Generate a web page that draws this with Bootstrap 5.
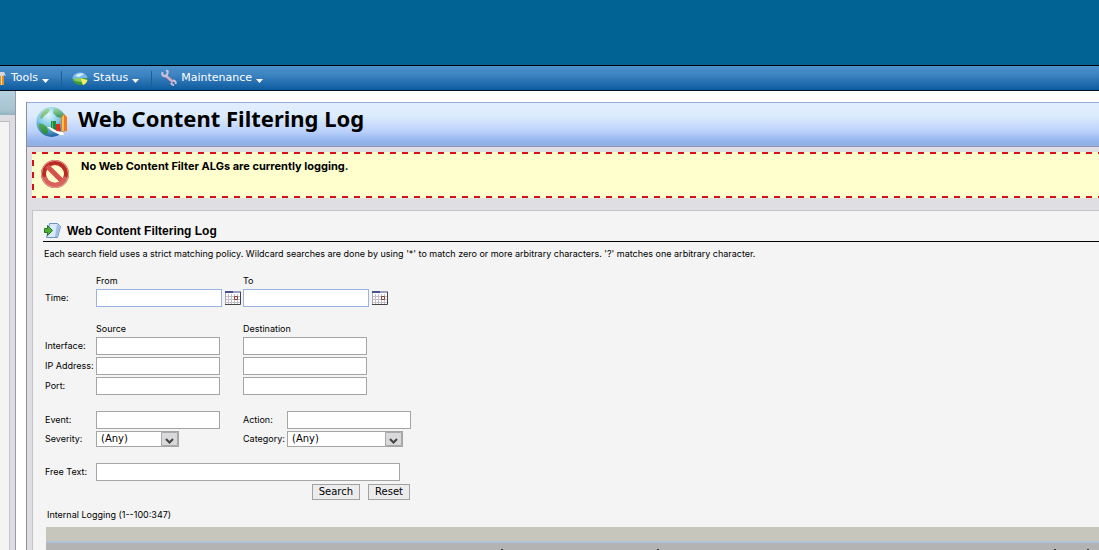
<!DOCTYPE html>
<html lang="en">
<head>
<meta charset="utf-8">
<meta name="viewport" content="width=device-width, initial-scale=1">
<title>Web Content Filtering Log</title>
<link href="https://cdn.jsdelivr.net/npm/bootstrap@5.3.0/dist/css/bootstrap.min.css" rel="stylesheet">
<style>
  body { font-family: Inter, Arial, sans-serif; font-size: 9px; line-height: 12px; color: #000; background: #fff; }
  .brand-bar { height: 65px; background: #006394; }
  .menu-bar { height: 26px; border-top: 1px solid #000; border-bottom: 1px solid #001020; background: linear-gradient(#4a92cd, #3b82c0 40%, #0c5a9e); font-family: "DejaVu Sans", Verdana, sans-serif; font-size: 11px; line-height: 24px; overflow: hidden; }
  .menu-bar .nav-link { color: #fff; padding: 0; display: flex; align-items: center; }
  .menu-bar .nav-item + .nav-item { margin-left: 12px; padding-left: 8px; background: linear-gradient(#1d5c96, #1d5c96) left center / 1px 14px no-repeat; }
  .caret { width: 7px; height: 4px; margin: 5px 0 0 4px; }
  .side-pane { width: 16px; flex: none; background: #dcdce2; border-right: 1px solid #9a9aa6; }
  .side-head { height: 24px; background: linear-gradient(#b6d0e0, #a5c4d0 80%, #93b3c0); }
  .side-body { margin: 6px 5px 0 0; background: #f4f4f4; border-top: 1px solid #bbb; border-right: 1px solid #c4c4cc; }
  .page-pane { margin: 11px 0 0 10px; background: #dfdfe3; border-left: 1px solid #8d8d99; min-width: 0; }
  .page-head { height: 45px; padding-left: 9px; border-top: 1px solid #94afd8; border-bottom: 1px solid #9490b8; background: linear-gradient(#e2eefd, #dcebfd 30%, #bcd2fa 65%, #94b5ee 88%, #8fb0de); }
  .page-head h1 { font: bold 22px/30px "Noto Sans", Tahoma, sans-serif; margin: 0 0 0 8px; }
  .notice { height: 46px; margin: 5px 0 0 5px; padding: 6px 0 0 9px; font: bold 11px/16px Inter, Arial, sans-serif;
    background:
      linear-gradient(90deg, #d3121a 50%, transparent 50%) 10px 0 / 12px 2px repeat-x,
      linear-gradient(90deg, #d3121a 50%, transparent 50%) 10px 100% / 12px 2px repeat-x,
      linear-gradient(#d3121a 50%, transparent 50%) 0 8px / 2px 12px repeat-y,
      #ffffce; }
  .log-panel { margin: 12px 0 0 5px; padding: 11px 0 0 10px; background: #f4f4f4; border-top: 1px solid #c3c3c8; border-left: 1px solid #c3c3c8; }
  .log-panel h2 { font: bold 12px/18px "Liberation Sans", Arial, sans-serif; margin: 0 0 0 5px; }
  .section-head { height: 20px; border-bottom: 1px solid #000; }
  .hint { margin: 6px 0 0 1px; }
  .form-area { padding: 15px 0 0 2px; gap: 2px; }
  .form-area .new-group { margin-top: 14px; }
  .form-area label { width: 51px; flex: none; white-space: nowrap; }
  .form-area .near-label { width: 44px; }
  .slot { width: 147px; flex: none; }
  .heads { padding-left: 51px; }
  .field { width: 124px; height: 18px; padding: 0 3px; border: 1px solid #a5a5a5; border-radius: 0; background: #fff; flex: none; }
  .date-field { width: 126px; border-color: #9bb3e0; }
  .wide-field { width: 304px; }
  .pick { height: 16px; appearance: none; border: 1px solid #a5a5a5; border-radius: 0; color: #000; padding: 0 4px; font: 10px/14px "DejaVu Sans", Verdana, sans-serif; background: #fff url("data:image/svg+xml,%3Csvg xmlns='http://www.w3.org/2000/svg' width='17' height='14'%3E%3Cpath fill='%23d9d9dc' stroke='%23a9a9a9' d='M.5.5h16v13H.5z'/%3E%3Cpath fill='none' stroke='%23444' stroke-width='2' d='M5 7l3.500 3.500L12 7'/%3E%3C/svg%3E") right center no-repeat; }
  .pick-narrow { width: 83px; }
  .pick-broad { width: 116px; }
  .cmd { height: 16px; padding: 0 6px; border: 1px solid #a2a2a2; border-radius: 0; background: #ececef; color: #000; font: 10px/14px "DejaVu Sans", Verdana, sans-serif; }
  .cmd-row { width: 365px; gap: 8px; padding-top: 1px; }
  .cal { padding: 0; border: 0; background: none; line-height: 0; margin-left: 3px; }
  .list-note { margin: 9px 0 6px 4px; }
  .grid-top { height: 16px; margin-left: 3px; background: #c6c6bc; border-bottom: 2px solid #adc3dc; }
  .grid-head { min-height: 7px; margin-left: 3px; background: #b3b3b3; }
  .tip { width: 2px; height: 1px; margin-top: 6px; background: #333; }
  .tip-first { margin-left: 455px; }
  .tip-second { margin-left: 154px; }
  .tip-third { margin-left: 395px; }
  .tip-fourth { margin-left: 31px; }
</style>
</head>
<body class="d-flex flex-column min-vh-100">
<header>
  <div class="brand-bar"></div>
  <nav class="menu-bar">
    <ul class="nav flex-nowrap">
      <li class="nav-item"><a class="nav-link" href="#">
        <svg width="11" height="18" viewBox="0 0 11 18"><path fill="#d98f38" d="M0 6h4v10H0z"/><path fill="#ffe0a4" d="M1 6h1v10H1z"/><path fill="#d5d8dc" d="M0 3h4l2 4-2-1-1 1H0z"/></svg>Tools<svg class="caret"><path fill="#fff" d="M0 0h7L3.500 4z"/></svg></a></li>
      <li class="nav-item"><a class="nav-link" href="#">
        <svg width="20" height="18" viewBox="0 0 20 18"><ellipse cx="11" cy="10" rx="7.500" ry="6" fill="#3f9b39"/><path fill="#75b9ee" d="M3.500 10C3 2 17 1 18.500 9L11 9z"/><path fill="#d9efff" d="M6 7q4-4 9-2l-5 3z"/><path fill="#f5ef66" d="M11 9l7.500 2q-1 4-4.500 5z"/><path fill="#8ccc65" d="M4 11q3-3 7-2l2 4q-5 0-9-2z"/></svg><span class="ms-1">Status</span><svg class="caret"><path fill="#fff" d="M0 0h7L3.500 4z"/></svg></a></li>
      <li class="nav-item"><a class="nav-link" href="#">
        <svg width="22" height="18" viewBox="0 0 22 18"><g fill="none"><path stroke="#75658e" stroke-width="4" d="M7 7l7 6"/><path stroke="#c3b3d2" stroke-width="2.500" d="M6 6l8 7"/><path stroke="#cfc2dc" stroke-width="2" d="M3.500 3q-1 3 1.500 4T8.500 4.500 7 2M12 14q1 2.500 3 2M16.500 15q1-3-2.500-3.500"/></g></svg>Maintenance<svg class="caret"><path fill="#fff" d="M0 0h7L3.500 4z"/></svg></a></li>
    </ul>
  </nav>
</header>
<div class="d-flex flex-grow-1">
  <aside class="side-pane d-flex flex-column"><div class="side-head"></div><div class="side-body flex-grow-1"></div></aside>
  <main class="page-pane flex-grow-1 d-flex flex-column">
    <div class="page-head d-flex align-items-start">
      <svg width="34" height="36" viewBox="0 0 34 36"><defs><radialGradient id="globe" cx=".4" cy=".25" r=".8"><stop offset="0" stop-color="#e2f8ff"/><stop offset=".5" stop-color="#7cc6e6"/><stop offset="1" stop-color="#14549a"/></radialGradient><linearGradient id="land" x2="0" y2="1"><stop offset="0" stop-color="#a5d99a"/><stop offset="1" stop-color="#218a33"/></linearGradient></defs><circle cx="15.500" cy="19" r="15" fill="url(#globe)"/><path fill="url(#land)" d="M5 11q3-4 7-6l2 2-2 3-4 3-2 3-2-1zM3 20l4 1 4 3 1 4-1 4q-6-3-8-8z"/><path fill="url(#land)" opacity=".8" d="M18 5q7 1 10 7l-2 3-5-1-4-4z"/><path fill="#1d8b3f" d="M15 18h5v10h-5z"/><path fill="#55bd62" d="M16 18h1v9h-1z"/><path fill="#d82a26" d="M20 21h4v9h-4z"/><path fill="#ee7a20" d="M25 14l3-3 3 3v14l-6 1z"/><path fill="#ffc14c" d="M26 14l2-2v16h-2z"/><path fill="#fff" d="M11 24l3 0 7 4 6 1 1 3-4 0-8-4z"/></svg>
      <h1>Web Content Filtering Log</h1>
    </div>
    <div class="notice d-flex align-items-start" role="alert">
      <svg class="me-2 flex-shrink-0" width="32" height="32" viewBox="0 0 32 32"><g fill="none" stroke-width="5"><circle cx="14" cy="16" r="11.500" stroke="#bd2a24"/><path stroke="#d4524b" d="M6 8l16 16"/><path stroke="#d9625b" d="M3 19a11.500 11.500 0 0 0 22 0"/><circle cx="14" cy="16" r="13.500" stroke="#e3a59a" stroke-width="1"/></g></svg>
      <div>No Web Content Filter ALGs are currently logging.</div>
    </div>
    <section class="log-panel flex-grow-1 d-flex flex-column">
      <div class="section-head d-flex">
        <svg class="flex-shrink-0" width="19" height="18" viewBox="0 0 19 18"><path fill="#d9e9fb" stroke="#6c93c5" d="M6.500 1.500h8l3 3-3 11h-11l1-4z"/><path fill="#9dbde8" d="M14 2l3 3-3 10h-2z"/><path fill="#50ae35" stroke="#24762a" d="M1.500 6.500h3v-3l5 5-5 5v-3h-3z"/></svg>
        <h2>Web Content Filtering Log</h2>
      </div>
      <p class="hint text-nowrap">Each search field uses a strict matching policy. Wildcard searches are done by using '*' to match zero or more arbitrary characters. '?' matches one arbitrary character.</p>
      <form class="form-area d-flex flex-column align-items-start" onsubmit="return false">
        <div class="heads d-flex"><span class="slot">From</span><span>To</span></div>
        <div class="d-flex align-items-center"><label for="from">Time:</label>
          <div class="slot d-flex align-items-center"><input class="field date-field" id="from" type="text"><button class="cal" type="button" aria-label="Pick start date"><svg width="16" height="16"><use href="#calendar"/></svg></button></div>
          <div class="slot d-flex align-items-center"><input class="field date-field" type="text" aria-label="Time to"><button class="cal" type="button" aria-label="Pick end date"><svg width="16" height="16"><use href="#calendar"/></svg></button></div>
        </div>
        <div class="heads new-group d-flex"><span class="slot">Source</span><span>Destination</span></div>
        <div class="d-flex align-items-center"><label for="iface-src">Interface:</label><div class="slot d-flex"><input class="field" id="iface-src" type="text"></div><input class="field" type="text" aria-label="Destination interface"></div>
        <div class="d-flex align-items-center"><label for="ip-src">IP Address:</label><div class="slot d-flex"><input class="field" id="ip-src" type="text"></div><input class="field" type="text" aria-label="Destination IP address"></div>
        <div class="d-flex align-items-center"><label for="port-src">Port:</label><div class="slot d-flex"><input class="field" id="port-src" type="text"></div><input class="field" type="text" aria-label="Destination port"></div>
        <div class="new-group d-flex align-items-center"><label for="event">Event:</label><div class="slot d-flex"><input class="field" id="event" type="text"></div><label class="near-label" for="action">Action:</label><input class="field" id="action" type="text"></div>
        <div class="d-flex align-items-center"><label for="severity">Severity:</label><div class="slot d-flex"><select class="pick pick-narrow" id="severity"><option>(Any)</option></select></div><label class="near-label" for="category">Category:</label><select class="pick pick-broad" id="category"><option>(Any)</option></select></div>
        <div class="new-group d-flex align-items-center"><label for="free">Free Text:</label><input class="field wide-field" id="free" type="text"></div>
        <div class="cmd-row d-flex justify-content-end"><button class="cmd" type="submit">Search</button><button class="cmd" type="reset">Reset</button></div>
      </form>
      <div class="list-note">Internal Logging (1--100:347)</div>
      <div class="grid-top"></div>
      <div class="grid-head flex-grow-1 d-flex overflow-hidden"><i class="tip tip-first"></i><i class="tip tip-second"></i><i class="tip tip-third"></i><i class="tip tip-fourth"></i></div>
    </section>
  </main>
</div>
<svg width="0" height="0" class="position-absolute"><symbol id="calendar" viewBox="0 0 16 16"><path fill="#fff" d="M0 1h16v14H0z"/><path stroke="#c3bfc9" d="M3.500 4v11M6.500 4v11M9.500 4v11M12.500 4v11M0 6.500h15M0 9.500h15M0 12.500h15"/><path fill="#46508e" d="M0 1h8v2H0z"/><path fill="#9ba0bd" d="M8 1h8v2H8z"/><path fill="none" stroke="#8c4134" d="M9.500 6.500h3v3h-3z"/><path fill="none" stroke="#444" d="M0 14.500h15.500V2"/><path stroke="#aaa" d="M.5 3v11"/></symbol></svg>
<script src="https://cdn.jsdelivr.net/npm/bootstrap@5.3.0/dist/js/bootstrap.bundle.min.js"></script>
</body>
</html>
